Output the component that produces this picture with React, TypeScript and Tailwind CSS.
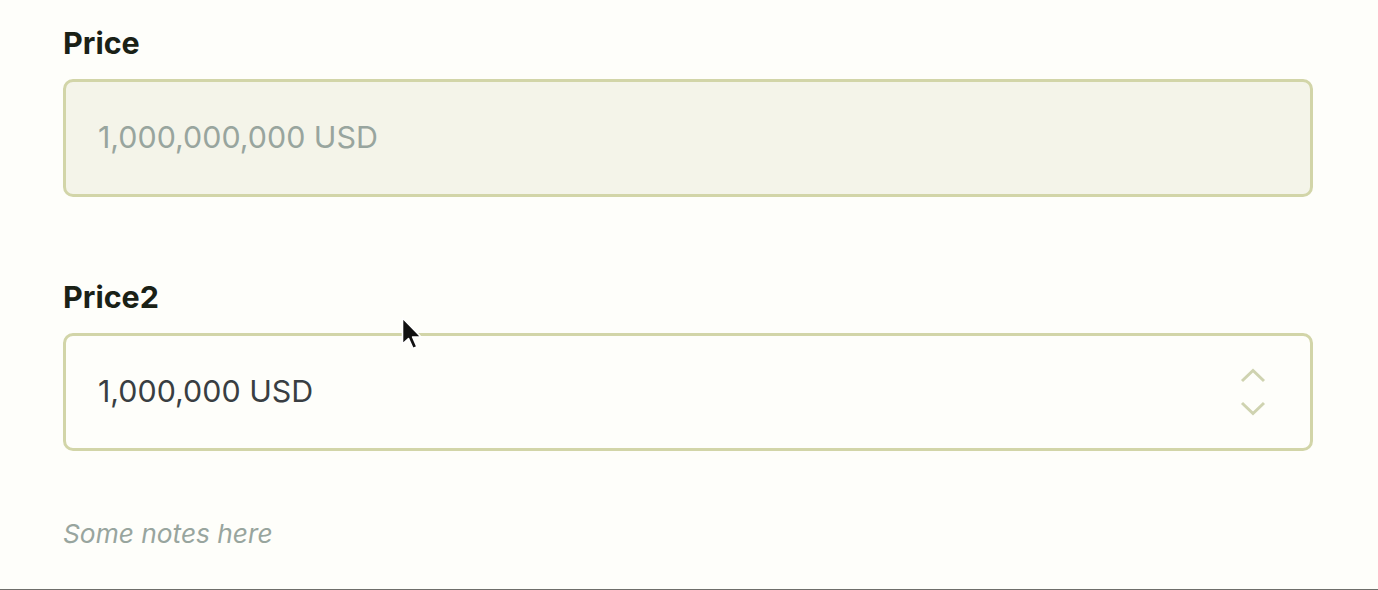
import React from "react";

function Chevrons() {
  return (
    <div className="flex flex-col items-center gap-[18px] -mt-[1px]">
      <svg width="26" height="15" viewBox="0 0 26 15" fill="none">
        <path d="M2 13 L13 2.5 L24 13" stroke="#cfd3b0" strokeWidth="3" />
      </svg>
      <svg width="26" height="15" viewBox="0 0 26 15" fill="none">
        <path d="M2 2 L13 12.5 L24 2" stroke="#cfd3b0" strokeWidth="3" />
      </svg>
    </div>
  );
}

function Cursor() {
  return (
    <svg
      className="absolute left-[399px] top-[315px]"
      width="26"
      height="40"
      viewBox="0 0 26 40"
      fill="none"
    >
      <path
        d="M3.5 3 L3.5 29 L9.5 23.5 L14 33.5 L18 31.8 L13.6 22 L22 22 Z"
        fill="#111"
        stroke="#fff"
        strokeWidth="1.6"
        strokeLinejoin="round"
      />
    </svg>
  );
}

export default function App() {
  return (
    <div
      className="relative w-[1378px] h-[590px] bg-[#fefefa] overflow-hidden border-b border-[#6e6e6a]"
      style={{ fontFamily: "Inter, 'Noto Sans', sans-serif" }}
    >
      <div className="flex flex-col px-[63px] pr-[65px] pt-[25px]">
        <div className="text-[30.5px] leading-[36px] font-bold text-[#1a2116]">Price</div>
        <div className="mt-[18px] h-[118px] rounded-[10px] border-[3px] border-[#d2d5a8] bg-[#f4f4e9] flex items-center pl-[32px]">
          <span className="text-[30.4px] text-[#98a59e]">1,000,000,000 USD</span>
        </div>

        <div className="mt-[82px] text-[30.5px] leading-[36px] font-bold text-[#1a2116]">Price2</div>
        <div className="mt-[18px] h-[118px] rounded-[10px] border-[3px] border-[#d2d5a8] bg-[#fefefa] flex items-center justify-between pl-[32px] pr-[44px]">
          <span className="text-[30.4px] text-[#393e42]">1,000,000 USD</span>
          <Chevrons />
        </div>

        <div className="mt-[66px] text-[26.3px] leading-[34px] italic text-[#98a59e]">Some notes here</div>
      </div>
      <Cursor />
    </div>
  );
}
